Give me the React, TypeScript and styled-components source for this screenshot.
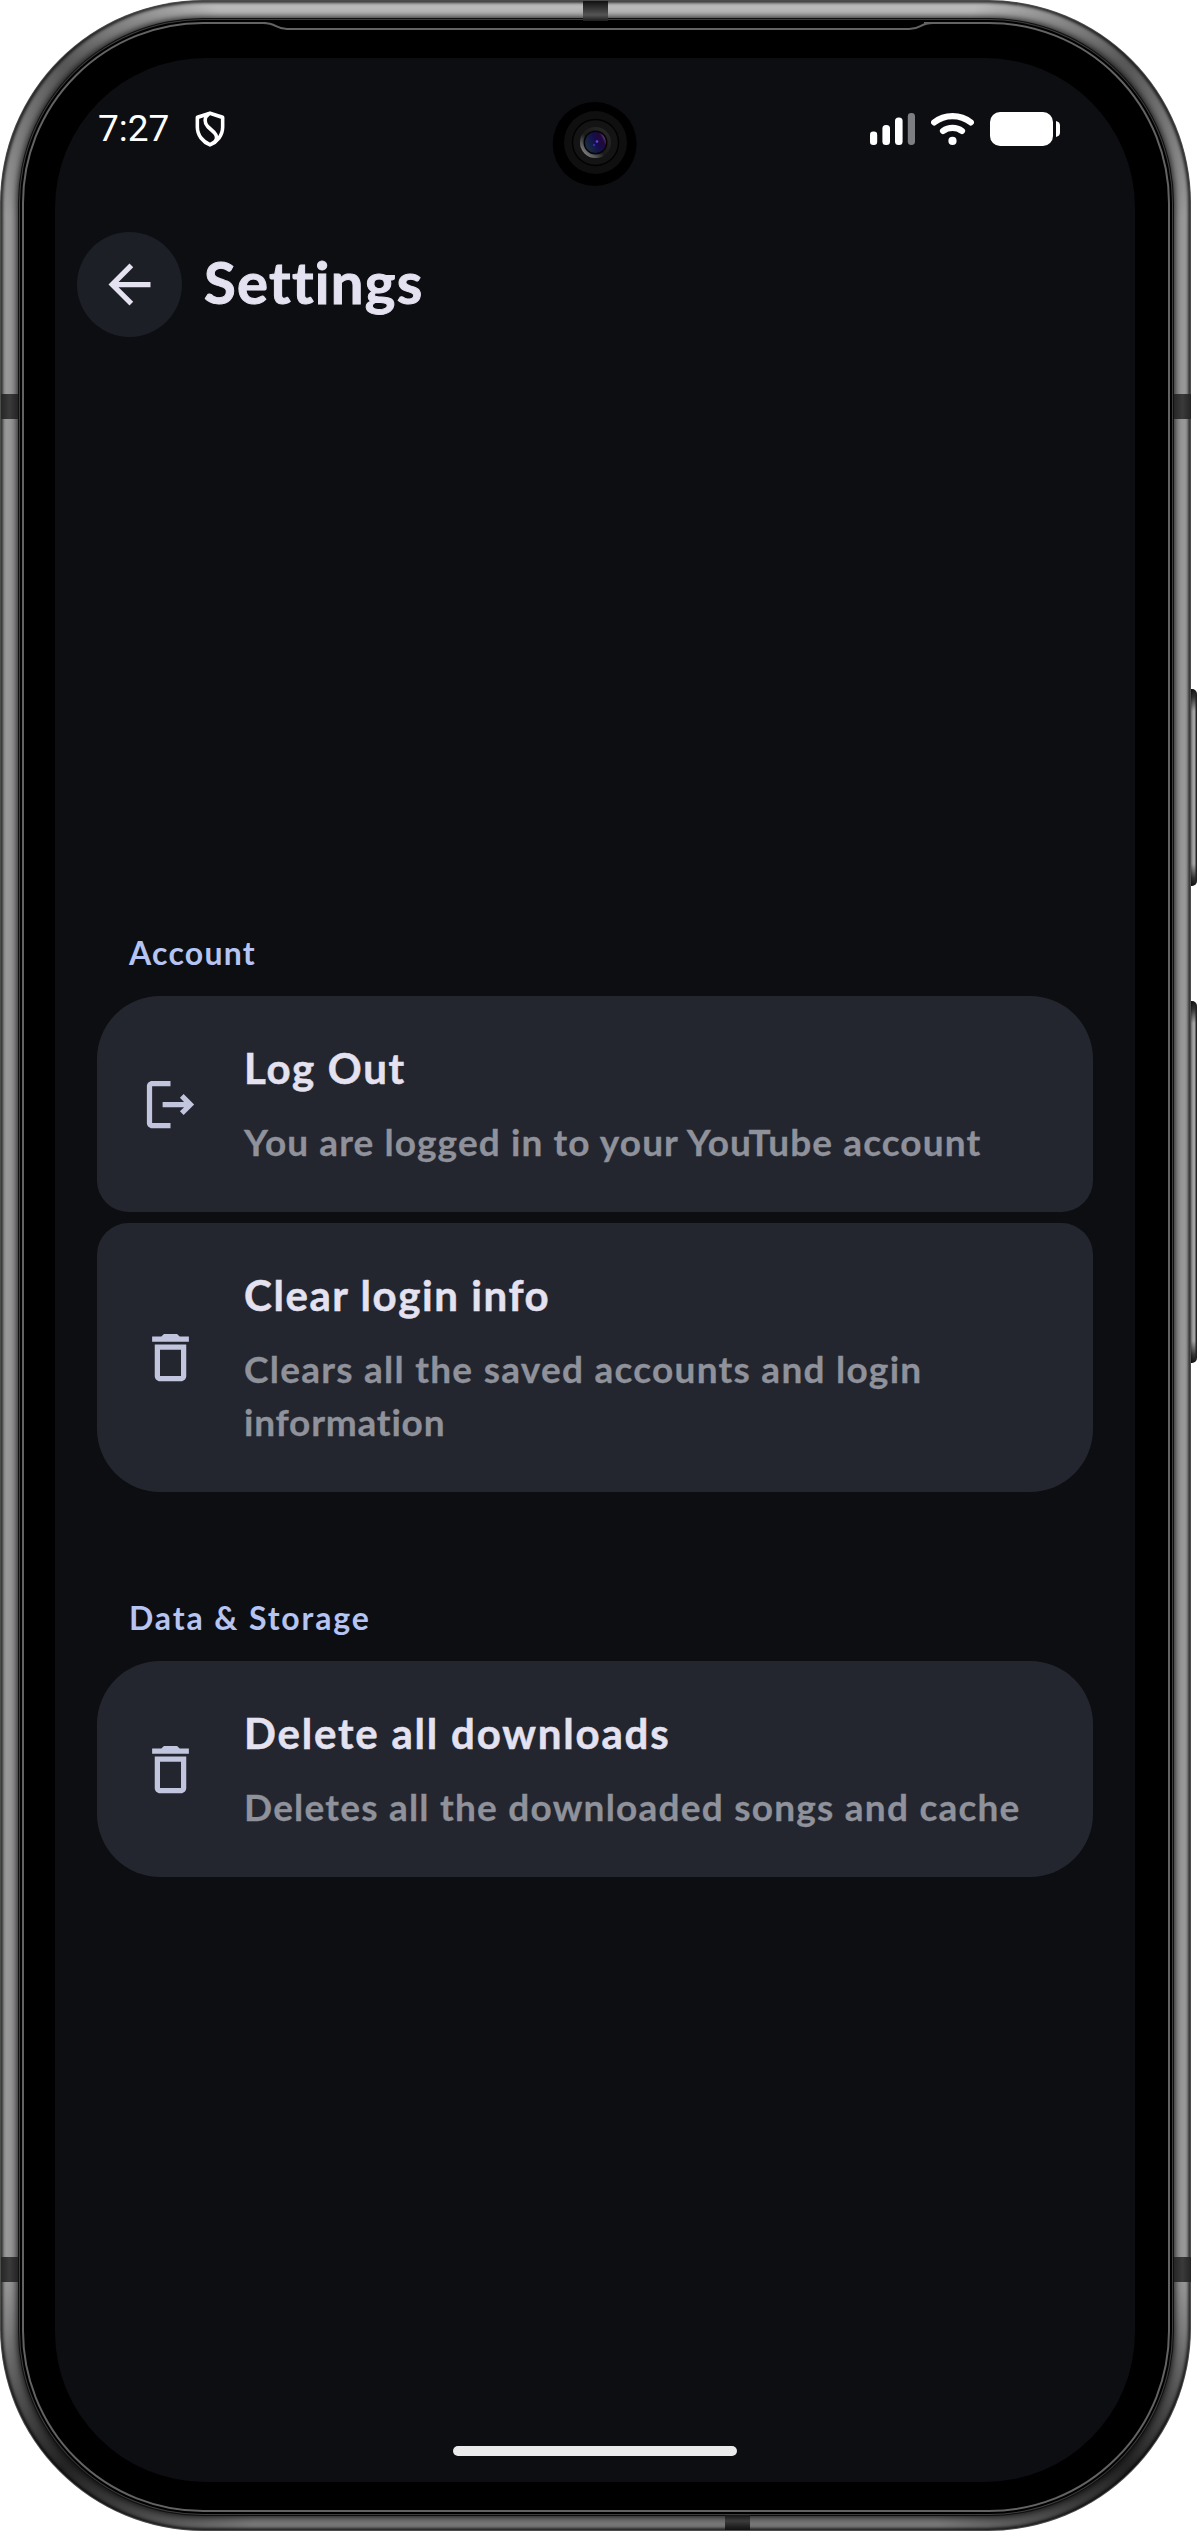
import React from "react";
import styled, { createGlobalStyle } from "styled-components";

const color = {
  screen: "#0d0e12",
  card: "#24262f",
  chip: "#1d1f27",
  title: "#e4e2f0",
  body: "#8f919b",
  label: "#b5c4f2",
  icon: "#c1c5dd",
};

const GlobalStyle = createGlobalStyle`
  * { box-sizing: border-box; }
  body { margin: 0; background: #ffffff; }
`;

/* ---------- device ---------- */

const Stage = styled.main`
  position: relative;
  width: 1198px;
  height: 2531px;
  padding: 0 7px 1px 0;
  overflow: hidden;
  background: #ffffff;
  font-family: Lato, "Liberation Sans", sans-serif;
`;

const Body = styled.div`
  position: relative;
  width: 1191px;
  height: 2531px;
  padding: 22px 21px 19px 22px;
  border-radius: 203px;
  background:
    radial-gradient(circle at 62px 62px, rgba(0, 0, 0, 0.52) 0, rgba(0, 0, 0, 0) 165px),
    radial-gradient(circle at 1129px 62px, rgba(0, 0, 0, 0.52) 0, rgba(0, 0, 0, 0) 165px),
    radial-gradient(circle at 62px 2469px, rgba(0, 0, 0, 0.72) 0, rgba(0, 0, 0, 0) 200px),
    radial-gradient(circle at 1129px 2469px, rgba(0, 0, 0, 0.72) 0, rgba(0, 0, 0, 0) 200px),
    linear-gradient(#bababa 0, #bababa 30px, #989898 220px, #989898 2330px, #787878 2500px);
  box-shadow:
    inset 0 0 0 1px #4b4d4b,
    inset 0 0 3px 3px rgba(0, 0, 0, 0.72);
`;

const Glass = styled.div`
  height: 100%;
  padding: 34px 33px 28px 31px;
  border: 2px solid #636363;
  border-radius: 181px;
  background: #000000;
  box-shadow:
    0 0 0 2px #000000,
    0 0 0 3px #3d3d3d,
    0 0 0 4px #101010,
    0 0 7px 5px rgba(0, 0, 0, 0.85);
`;

const Screen = styled.div`
  display: flex;
  flex-direction: column;
  height: 100%;
  border-radius: 150px;
  background: ${color.screen};
`;

const Antenna = styled.i<{ $x: number; $y: number; $w: number; $h: number }>`
  position: absolute;
  left: ${(p) => p.$x}px;
  top: ${(p) => p.$y}px;
  width: ${(p) => p.$w}px;
  height: ${(p) => p.$h}px;
  background: linear-gradient(#111111 0, #2a2a2a 25%, #555555 70%, #1c1c1c 100%);
`;

const BottomAntenna = styled(Antenna)`
  background: linear-gradient(#151515, #3c3c3c 40%, #111111);
`;

const SideAntenna = styled(Antenna)`
  background: linear-gradient(90deg, #262626, #3a3a3a 50%, #242424);
`;

const SideButton = styled.i<{ $y: number; $h: number }>`
  position: absolute;
  left: 1191px;
  top: ${(p) => p.$y}px;
  width: 6px;
  height: ${(p) => p.$h}px;
  border-radius: 0 5px 5px 0;
  background:
    linear-gradient(90deg, rgba(0, 0, 0, 0.35) 0, rgba(0, 0, 0, 0) 35%, rgba(0, 0, 0, 0) 60%, #222222 92%),
    linear-gradient(#151515 0, #333333 8px, #a2a2a2 22px, #a2a2a2 calc(100% - 22px), #333333 calc(100% - 8px), #111111 100%);
`;

const Earpiece = styled.svg`
  position: absolute;
  left: 255px;
  top: 20px;
`;

const Camera = styled.svg`
  position: absolute;
  left: 552px;
  top: 101px;
`;

/* ---------- status bar ---------- */

const StatusBar = styled.div`
  display: flex;
  align-items: center;
  justify-content: space-between;
  height: 142px;
  padding: 0 75px 0 43px;
  color: #ffffff;
`;

const StatusGroup = styled.div<{ $gap: number }>`
  display: flex;
  align-items: center;
  gap: ${(p) => p.$gap}px;
`;

const Clock = styled.time`
  width: 72px;
  font: 400 37px/44px Roboto, "Liberation Sans", sans-serif;
`;

/* ---------- app bar ---------- */

const AppBar = styled.header`
  display: flex;
  align-items: center;
  gap: 22px;
  height: 105px;
  margin-top: 32px;
  padding-left: 22px;
`;

const BackButton = styled.button`
  display: grid;
  place-items: center;
  width: 105px;
  height: 105px;
  padding: 0;
  border: 0;
  border-radius: 50%;
  background: ${color.chip};
`;

const Heading = styled.h1`
  margin: 0;
  padding-bottom: 5px;
  color: ${color.title};
  font-size: 58px;
  font-weight: 700;
  line-height: 68px;
  letter-spacing: 1.3px;
  -webkit-text-stroke: 1px ${color.title};
`;

/* ---------- settings list ---------- */

const List = styled.div`
  flex: 1;
  display: flex;
  flex-direction: column;
  gap: 105px;
  padding: 595px 42px 0;
`;

const Group = styled.section`
  display: flex;
  flex-direction: column;
  gap: 22px;
`;

const GroupLabel = styled.h2<{ $track: number }>`
  margin: 0 0 0 32px;
  color: ${color.label};
  font-size: 32px;
  font-weight: 700;
  line-height: 42px;
  letter-spacing: ${(p) => p.$track}px;
`;

const Cards = styled.div`
  display: flex;
  flex-direction: column;
  gap: 11px;
`;

const Card = styled.div`
  display: flex;
  align-items: center;
  gap: 42px;
  padding: 41px 42px 44px;
  border-radius: 31.5px;
  background: ${color.card};

  &:first-child {
    border-top-left-radius: 63px;
    border-top-right-radius: 63px;
  }
  &:last-child {
    border-bottom-left-radius: 63px;
    border-bottom-right-radius: 63px;
  }
`;

const CardIcon = styled.svg`
  flex: none;
  width: 63px;
  height: 63px;
  margin-top: 3px;
  fill: ${color.icon};
`;

const CardText = styled.div`
  flex: 1;
  display: flex;
  flex-direction: column;
  gap: 15px;
`;

const CardTitle = styled.div<{ $track: number }>`
  color: ${color.title};
  font-size: 42px;
  font-weight: 700;
  line-height: 63px;
  letter-spacing: ${(p) => p.$track}px;
  -webkit-text-stroke: 0.5px ${color.title};
`;

const CardBody = styled.div<{ $track: number }>`
  color: ${color.body};
  font-size: 37px;
  font-weight: 700;
  line-height: 53px;
  letter-spacing: ${(p) => p.$track}px;
  white-space: nowrap;
  -webkit-text-stroke: 0.3px ${color.body};
`;

const HomeBar = styled.div`
  align-self: center;
  width: 284px;
  height: 10px;
  margin-bottom: 26px;
  border-radius: 5px;
  background: #ebebeb;
`;

/* ---------- glyphs ---------- */

const LOGOUT =
  "M17 8l-1.41 1.41L17.17 11H9v2h8.17l-1.58 1.58L17 16l4-4-4-4zM5 5h7V3H5c-1.1 0-2 .9-2 2v14c0 1.1.9 2 2 2h7v-2H5V5z";
const TRASH =
  "M16 9v10H8V9h8m-1.5-6h-5l-1 1H5v2h14V4h-3.5l-1-1zM18 7H6v12c0 1.1.9 2 2 2h8c1.1 0 2-.9 2-2V7z";
const ARROW =
  "M20 11H7.83l5.59-5.59L12 4l-8 8 8 8 1.41-1.41L7.83 13H20v-2z";

const ShieldIcon = () => (
  <svg width="30" height="36" viewBox="0 0 32 36" preserveAspectRatio="none" fill="none" stroke="#fff" strokeWidth="3.8" strokeLinejoin="round" strokeLinecap="round">
    <path d="M16 2.2 L29.500 6.400 V16 C29.500 24.500 23.500 31 16 33.800 C8.500 31 2.500 24.500 2.500 16 V6.400 Z" />
    <path d="M14.500 3 C9.500 6.500 10 12 13.500 15.500 L20.500 21.500 C24 25 23.500 28 21.500 30.500" />
  </svg>
);

const SignalIcon = () => (
  <svg width="45" height="34" viewBox="0 0 45 34" fill="#fff">
    <rect x="0" y="19.500" width="7.200" height="13.500" rx="3.200" />
    <rect x="12.400" y="13" width="7.600" height="20" rx="3.500" />
    <rect x="25" y="5.500" width="7.600" height="27.500" rx="3.500" />
    <rect x="37.800" y="1" width="7.200" height="32" rx="3.400" fill="#7d7e81" />
  </svg>
);

const WifiIcon = () => (
  <svg width="43" height="34" viewBox="0 0 43 34" fill="none" stroke="#fff" strokeWidth="6.200" strokeLinecap="round">
    <path d="M3.200 10.400 C13.500 2 29.500 2 39.800 10.400" />
    <path d="M12 18.900 C17.500 14.900 25.500 14.900 31 18.900" />
    <circle cx="21.500" cy="28.900" r="4.100" fill="#fff" stroke="none" />
  </svg>
);

const BatteryIcon = () => (
  <svg width="70" height="34" viewBox="0 0 70 34" fill="#fff">
    <rect width="63" height="34" rx="10" />
    <path d="M66 9 C68.600 9.600 70 11.200 70 13.500 V20.500 C70 22.800 68.600 24.400 66 25 Z" />
  </svg>
);

type Item = { icon: string; title: string; titleTrack: number; body: [string, number][] };
type Section = { label: string; track: number; items: Item[] };

const sections: Section[] = [
  {
    label: "Account",
    track: 1.25,
    items: [
      {
        icon: LOGOUT,
        title: "Log Out",
        titleTrack: 1.7,
        body: [["You are logged in to your YouTube account", 1.1]],
      },
      {
        icon: TRASH,
        title: "Clear login info",
        titleTrack: 1.6,
        body: [
          ["Clears all the saved accounts and login", 1.26],
          ["information", 0.8],
        ],
      },
    ],
  },
  {
    label: "Data & Storage",
    track: 1.88,
    items: [
      {
        icon: TRASH,
        title: "Delete all downloads",
        titleTrack: 1.8,
        body: [["Deletes all the downloaded songs and cache", 1.23]],
      },
    ],
  },
];

export default function App() {
  return (
    <Stage>
      <GlobalStyle />
      <SideButton $y={689} $h={197} />
      <SideButton $y={1001} $h={362} />
      <Body>
        <Antenna $x={583} $y={1} $w={25} $h={20} />
        <SideAntenna $x={1} $y={394} $w={17} $h={25} />
        <SideAntenna $x={1174} $y={394} $w={17} $h={25} />
        <SideAntenna $x={1} $y={2257} $w={17} $h={25} />
        <SideAntenna $x={1174} $y={2257} $w={17} $h={25} />
        <BottomAntenna $x={725} $y={2515} $w={25} $h={15} />
        <Glass>
          <Screen>
            <StatusBar>
              <StatusGroup $gap={25}>
                <Clock>7:27</Clock>
                <ShieldIcon />
              </StatusGroup>
              <StatusGroup $gap={16}>
                <SignalIcon />
                <WifiIcon />
                <BatteryIcon />
              </StatusGroup>
            </StatusBar>
            <AppBar>
              <BackButton aria-label="Back">
                <svg width="63" height="63" viewBox="0 0 24 24" fill={color.title}>
                  <path d={ARROW} />
                </svg>
              </BackButton>
              <Heading>Settings</Heading>
            </AppBar>
            <List>
              {sections.map((section) => (
                <Group key={section.label}>
                  <GroupLabel $track={section.track}>{section.label}</GroupLabel>
                  <Cards>
                    {section.items.map((item) => (
                      <Card key={item.title}>
                        <CardIcon viewBox="0 0 24 24">
                          <path d={item.icon} />
                        </CardIcon>
                        <CardText>
                          <CardTitle $track={item.titleTrack}>{item.title}</CardTitle>
                          <div>
                            {item.body.map(([line, track]) => (
                              <CardBody key={line} $track={track}>
                                {line}
                              </CardBody>
                            ))}
                          </div>
                        </CardText>
                      </Card>
                    ))}
                  </Cards>
                </Group>
              ))}
            </List>
            <HomeBar />
          </Screen>
        </Glass>
        <Earpiece width="680" height="14" viewBox="0 0 680 14" fill="none">
          <rect x="11" y="1" width="658" height="9" fill="#000" />
          <path d="M8 3 C22 3 20 9 32 9 H654 C667 9 664 3 678 3" stroke="#636363" strokeWidth="2" />
        </Earpiece>
        <Camera width="86" height="86" viewBox="0 0 86 86">
          <defs>
            <linearGradient id="rim" x1="0" y1="1" x2="1" y2="0">
              <stop offset="0.1" stopColor="#8a8a8a" />
              <stop offset="0.45" stopColor="#1a1a1a" />
              <stop offset="1" stopColor="#2c2c2c" />
            </linearGradient>
            <linearGradient id="lens" x1="0" y1="0.7" x2="1" y2="0.2">
              <stop offset="0" stopColor="#17323f" />
              <stop offset="0.5" stopColor="#140f4c" />
              <stop offset="0.8" stopColor="#22083a" />
              <stop offset="1" stopColor="#8a5a9a" />
            </linearGradient>
          </defs>
          <circle cx="42.700" cy="43" r="42" fill="#000" />
          <circle cx="43.500" cy="41.500" r="31.500" fill="#0f0f0f" />
          <circle cx="43.500" cy="41.500" r="23" fill="#141414" stroke="#020202" strokeWidth="1.500" />
          <circle cx="43.500" cy="41.500" r="15.500" fill="url(#rim)" />
          <circle cx="43.500" cy="41.500" r="12" fill="#050505" />
          <circle cx="43.500" cy="41.500" r="10.500" fill="url(#lens)" />
          <circle cx="45" cy="40.500" r="1.300" fill="#6a45e0" />
          <circle cx="42" cy="44" r="1.100" fill="#3a2fc0" />
        </Camera>
      </Body>
    </Stage>
  );
}
